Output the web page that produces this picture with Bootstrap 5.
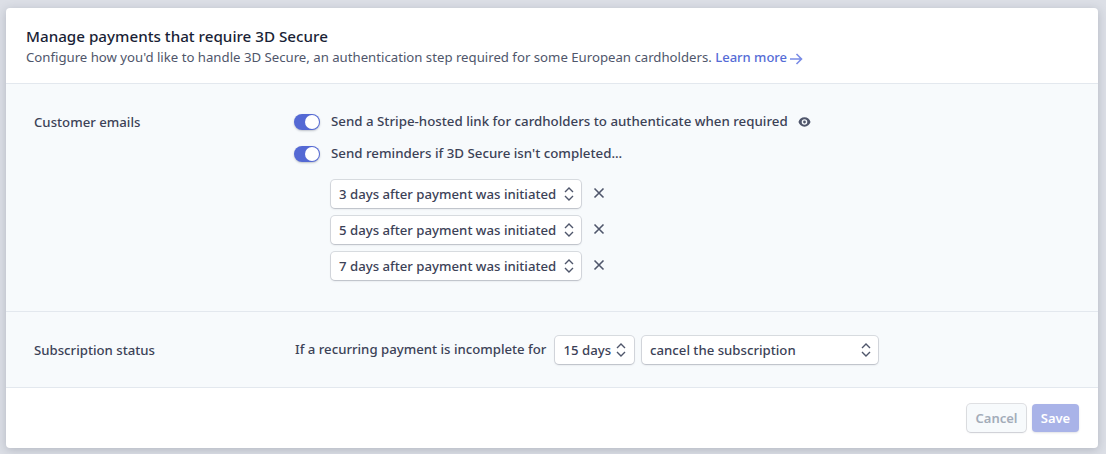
<!DOCTYPE html>
<html lang="en">
<head>
    <meta charset="UTF-8">
    <title>3D Secure settings</title>
    <link href="https://cdn.jsdelivr.net/npm/bootstrap@5.3.3/dist/css/bootstrap.min.css" rel="stylesheet">
    <style>
        body { background: #dcdfe6; font-family: "Noto Sans", sans-serif; font-size: 13.2px; font-weight: 500; color: #3c4257; height: 454px; overflow: hidden; padding: 8px 8px 6px 6px; }
        .panel { background: #fff; border-radius: 4px; height: 440px; box-shadow: 0 2px 10px rgba(60,66,87,.25); overflow: hidden; }
        .panel-head { height: 76px; padding: 18px 20px 0; border-bottom: 1px solid #e3e8ee; }
        .panel-title { font-size: 15.2px; font-weight: 500; color: #1a1f36; line-height: 20px; margin: 0; }
        .panel-sub { line-height: 22px; color: #4f566b; font-weight: 400; }
        .more-link { color: #556cd6; font-weight: 500; font-size: 13px; text-decoration: none; }
        .more-arrow { margin-left: 2px; }
        .body-top { height: 228px; padding: 26px 28px 0; background: #f7fafc; border-bottom: 1px solid #e3e8ee; }
        .body-sub { height: 76px; padding: 1px 28px 0; background: #f7fafc; border-bottom: 1px solid #e3e8ee; }
        .field-label { width: 260px; line-height: 24px; flex-shrink: 0; }
        .sub-text { margin-left: 1px; font-size: 13.2px; }
        .switch-row { height: 24px; font-size: 13.3px; }
        .switch-text { margin-left: 3px; }
        .eye-icon { margin-left: 2px; }
        .switch-track { width: 26px; height: 16px; border-radius: 8px; background: #5469d4; position: relative; flex-shrink: 0; box-shadow: 0 1px 2px rgba(60,66,87,.3); }
        .switch-knob { position: absolute; top: 1px; right: 1px; width: 14px; height: 14px; border-radius: 50%; background: #fff; }
        .remind-list { margin: 14px 0 0 37px; gap: 8px; }
        .pick { height: 28px; background: #fff; border-radius: 4px; box-shadow: 0 0 0 1px rgba(60,66,87,.16), 0 1px 2px rgba(60,66,87,.2); white-space: nowrap; padding: 1px 6px 0 8px; }
        .pick svg { margin-top: -1px; }
        .pick-list { width: 250px; }
        .pick-first { margin-left: 9px; padding-right: 7px; }
        .pick-wide { width: 236px; margin-left: 8px; }
        .x-icon { margin: 0 0 2px 12px; }
        .foot-btn { height: 28px; border-radius: 4px; font-size: 13px; font-weight: 600; border: 0; padding: 1px 0 0; }
        .foot-cancel { width: 59px; background: #f7fafc; color: #a3acb9; box-shadow: 0 0 0 1px rgba(60,66,87,.16), 0 1px 2px rgba(60,66,87,.12); }
        .foot-save { width: 47px; background: #a9b3e8; color: #fff; box-shadow: 0 1px 2px rgba(60,66,87,.15); }
        .panel-foot { padding: 16px 19px 0 0; gap: 6px; }
    </style>
</head>
<body>
<div class="panel">
    <div class="panel-head">
        <h1 class="panel-title">Manage payments that require 3D Secure</h1>
        <div class="panel-sub">Configure how you'd like to handle 3D Secure, an authentication step required for some European cardholders.
            <a href="#" class="more-link">Learn more<svg class="more-arrow" width="14" height="12" viewBox="0 0 14 12" fill="none" stroke="#7a8ce6" stroke-width="1.6"><path d="M1 6h11.500M7.500 1l5 5-5 5"/></svg></a></div>
    </div>

    <div class="body-top d-flex">
        <div class="field-label">Customer emails</div>
        <div class="d-flex flex-column">
            <div class="switch-row d-flex align-items-center gap-2 mb-2">
                <span class="switch-track"><span class="switch-knob"></span></span>
                <span class="switch-text">Send a Stripe-hosted link for cardholders to authenticate when required</span>
                <svg class="eye-icon" width="13" height="10" viewBox="0 0 14 10"><path fill="#4f566b" fill-rule="evenodd" d="M7 0C3.800 0 1.400 2.200.5 5c.9 2.800 3.300 5 6.500 5s5.600-2.200 6.500-5C12.600 2.200 10.200 0 7 0zm0 8a3 3 0 1 1 0-6 3 3 0 0 1 0 6zm0-1.500a1.500 1.500 0 1 0 0-3 1.500 1.500 0 0 0 0 3z"/></svg>
            </div>
            <div class="switch-row d-flex align-items-center gap-2">
                <span class="switch-track"><span class="switch-knob"></span></span>
                <span class="switch-text">Send reminders if 3D Secure isn't completed...</span>
            </div>
            <div class="d-flex flex-column remind-list">
                <div class="d-flex align-items-center"><div class="pick pick-list d-flex align-items-center justify-content-between">3 days after payment was initiated<svg width="12" height="14" viewBox="0 0 12 14" fill="none" stroke="#4f566b" stroke-width="1.4"><path d="M2 5l4-4 4 4M2 9l4 4 4-4"/></svg></div><svg class="x-icon" width="12" height="12" viewBox="0 0 12 12" fill="none" stroke="#4f566b" stroke-width="1.6"><path d="M1.500 1.500l9 9M10.500 1.500l-9 9"/></svg></div>
                <div class="d-flex align-items-center"><div class="pick pick-list d-flex align-items-center justify-content-between">5 days after payment was initiated<svg width="12" height="14" viewBox="0 0 12 14" fill="none" stroke="#4f566b" stroke-width="1.4"><path d="M2 5l4-4 4 4M2 9l4 4 4-4"/></svg></div><svg class="x-icon" width="12" height="12" viewBox="0 0 12 12" fill="none" stroke="#4f566b" stroke-width="1.6"><path d="M1.500 1.500l9 9M10.500 1.500l-9 9"/></svg></div>
                <div class="d-flex align-items-center"><div class="pick pick-list d-flex align-items-center justify-content-between">7 days after payment was initiated<svg width="12" height="14" viewBox="0 0 12 14" fill="none" stroke="#4f566b" stroke-width="1.4"><path d="M2 5l4-4 4 4M2 9l4 4 4-4"/></svg></div><svg class="x-icon" width="12" height="12" viewBox="0 0 12 12" fill="none" stroke="#4f566b" stroke-width="1.6"><path d="M1.500 1.500l9 9M10.500 1.500l-9 9"/></svg></div>
            </div>
        </div>
    </div>

    <div class="body-sub d-flex align-items-center">
        <div class="field-label">Subscription status</div>
        <div class="d-flex align-items-center">
            <span class="sub-text">If a recurring payment is incomplete for</span>
            <div class="pick pick-first d-flex align-items-center">15 days<svg class="ms-1" width="12" height="14" viewBox="0 0 12 14" fill="none" stroke="#4f566b" stroke-width="1.4"><path d="M2 5l4-4 4 4M2 9l4 4 4-4"/></svg></div>
            <div class="pick pick-wide d-flex align-items-center justify-content-between">cancel the subscription<svg width="12" height="14" viewBox="0 0 12 14" fill="none" stroke="#4f566b" stroke-width="1.4"><path d="M2 5l4-4 4 4M2 9l4 4 4-4"/></svg></div>
        </div>
    </div>

    <div class="panel-foot d-flex justify-content-end">
        <button class="foot-btn foot-cancel" type="button">Cancel</button>
        <button class="foot-btn foot-save" type="button">Save</button>
    </div>
</div>
<script src="https://cdn.jsdelivr.net/npm/bootstrap@5.3.3/dist/js/bootstrap.bundle.min.js"></script>
</body>
</html>
